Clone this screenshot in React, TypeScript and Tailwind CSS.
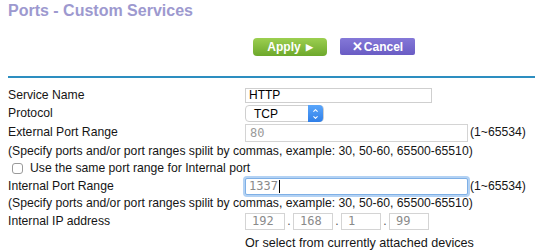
import { ChevronUp, ChevronDown } from 'lucide-react';

const sans = "font-['Liberation_Sans',Arial,sans-serif]";
const mono = "font-['DejaVu_Sans_Mono','Liberation_Mono',monospace]";

const hint = '(Specify ports and/or port ranges spilit by commas, example: 30, 50-60, 65500-65510)';

function Label({ children }: { children: React.ReactNode }) {
  return <div className="w-[237px] shrink-0">{children}</div>;
}

function IpBox({ value }: { value: string }) {
  return (
    <div className={`flex h-[17px] w-[40px] items-center border border-[#d4d4d4] bg-white pl-[6px] text-[12px] text-[#8a8a8a] ${mono}`}>
      {value}
    </div>
  );
}

export default function App() {
  return (
    <div className={`h-[252px] w-[535px] overflow-hidden bg-white text-[12.2px] leading-none text-[#151515] ${sans}`}>
      {/* Header */}
      <div className="pl-[8px] pt-[2px]">
        <h1 className="text-[16px] font-bold leading-[18px] text-[#9d99cf]">Ports - Custom Services</h1>
      </div>

      {/* Buttons */}
      <div className="mt-[18px] flex pl-[253px]">
        <button className="flex h-[18px] w-[74px] items-center justify-center gap-[5px] rounded-[4px] bg-gradient-to-b from-[#9ccf50] to-[#6da82b] text-[12px] font-bold text-white">
          Apply <span className="text-[9px]">▶</span>
        </button>
        <button className="ml-[13px] flex h-[17px] w-[75px] items-center justify-center gap-[1px] rounded-[2px] bg-gradient-to-b from-[#8478d8] to-[#6a5cc4] text-[12px] font-bold text-white">
          <span className="text-[13px]">✕</span>Cancel
        </button>
      </div>

      {/* Divider */}
      <div className="ml-[8px] mt-[20px] h-[2px] bg-[#2d8ec0]" />

      {/* Form */}
      <div className="mt-[8px] pl-[8px]">
        <div className="flex h-[18px] items-center">
          <Label>Service Name</Label>
          <div className="flex h-[15px] w-[187px] items-center border border-[#cfcfcf] bg-white pl-[3px] text-[12px] text-black">
            HTTP
          </div>
        </div>

        <div className="flex h-[19px] items-center">
          <Label>Protocol</Label>
          <div className="flex h-[17px] w-[79px] items-center justify-between rounded-[4px] border border-[#cfcfcf] bg-white pl-[8px] text-[12px] text-black">
            TCP
            <div className="flex h-[17px] w-[15px] flex-col items-center justify-center rounded-r-[4px] bg-gradient-to-b from-[#5aa6fb] to-[#2f7fe8] text-white">
              <ChevronUp size={7} strokeWidth={3.5} />
              <ChevronDown size={7} strokeWidth={3.5} />
            </div>
          </div>
        </div>

        <div className="flex h-[19px] items-center">
          <Label>External Port Range</Label>
          <div className={`flex h-[18px] w-[223px] items-center border border-[#d4d4d4] bg-white pl-[4px] text-[12px] text-[#9a9a9a] ${mono}`}>
            80
          </div>
          <span className="ml-[2px]">(1~65534)</span>
        </div>

        <div className="flex h-[18px] items-center">{hint}</div>

        <div className="flex h-[17px] items-center pl-[4px]">
          <div className="h-[11px] w-[11px] rounded-[3px] border border-[#9a9a9a] bg-white" />
          <span className="ml-[7px]">Use the same port range for Internal port</span>
        </div>

        <div className="flex h-[18px] items-center">
          <Label>Internal Port Range</Label>
          <div className={`flex h-[17px] w-[223px] items-center rounded-[2px] border border-[#7fb0e6] bg-white pl-[3px] text-[12px] text-[#8a8a8a] shadow-[0_0_0_2px_#b3d2f4] ${mono}`}>
            1337<span className="ml-[1px] h-[13px] w-px bg-black" />
          </div>
          <span className="ml-[2px]">(1~65534)</span>
        </div>

        <div className="flex h-[17px] items-center">{hint}</div>

        <div className="flex h-[18px] items-center">
          <Label>Internal IP address</Label>
          <div className="flex items-center gap-[1px]">
            <IpBox value="192" />
            <span className="w-[6px] text-center text-[#555]">.</span>
            <IpBox value="168" />
            <span className="w-[6px] text-center text-[#555]">.</span>
            <IpBox value="1" />
            <span className="w-[6px] text-center text-[#555]">.</span>
            <IpBox value="99" />
          </div>
        </div>

        <div className="mt-[4px] flex h-[18px] items-center pl-[237px] text-[12.6px]">
          Or select from currently attached devices
        </div>
      </div>
    </div>
  );
}
